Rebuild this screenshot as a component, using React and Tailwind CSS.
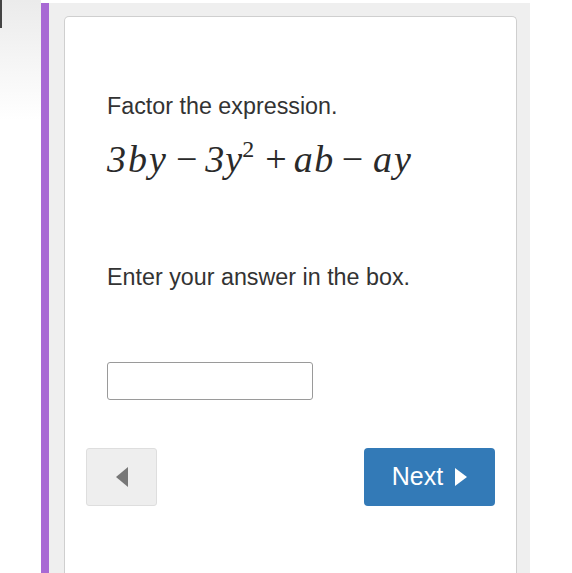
export default function App() {
  return (
    <div className="flex h-[573px] w-[572px] overflow-hidden bg-white font-['Liberation_Sans',Arial,sans-serif] text-[#333]">
      {/* left gutter */}
      <div className="flex w-[41px] shrink-0 flex-col">
        <div className="flex h-[120px] bg-gradient-to-b from-[#ebebeb] via-[#f5f5f5] to-white">
          <div className="h-[28px] w-[2px] bg-[#444]" />
        </div>
      </div>

      <div className="flex flex-1 pt-[3px]">
        <div className="w-[8px] shrink-0 bg-[#a869d4]" />

        <div className="flex w-[481px] shrink-0 flex-col bg-[#efefef] pl-[15px] pr-[13px] pt-[13px]">
          <div className="flex flex-1 flex-col rounded-t-[5px] border border-b-0 border-[#cfcfcf] bg-white">
            <div className="pl-[42px] pt-[74px]">
              <p className="text-[23.3px] leading-[30px]">Factor the expression.</p>

              <p className="mt-[18px] flex h-[40px] items-baseline font-['Liberation_Serif','Times_New_Roman',serif] text-[38px] leading-[40px] text-[#2a2a2a]">
                <i className="tracking-[2px]">3by</i>
                <span className="ml-[8px]">−</span>
                <i className="ml-[8px] tracking-[1px]">3y</i>
                <span className="relative top-[-15px] ml-[-1px] text-[24px] leading-none">2</span>
                <span className="ml-[11px]">+</span>
                <i className="ml-[7px] tracking-[1.5px]">ab</i>
                <span className="ml-[7px]">−</span>
                <i className="ml-[10px] tracking-[2px]">ay</i>
              </p>

              <p className="mt-[83px] text-[23.3px] leading-[30px]">Enter your answer in the box.</p>

              <input
                type="text"
                aria-label="answer"
                className="mt-[70px] block h-[38px] w-[206px] rounded-[3px] border border-[#9a9a9a] bg-white px-2 outline-none"
              />
            </div>

            <div className="mt-[48px] flex items-start justify-between pl-[21px] pr-[21px]">
              <button className="flex h-[58px] w-[71px] items-center justify-center rounded-[3px] border border-[#dedede] bg-[#eeeeee]">
                <svg width="12" height="20" viewBox="0 0 12 20">
                  <path d="M12 0 L0 10 L12 20 Z" fill="#777" />
                </svg>
              </button>

              <button className="flex h-[58px] w-[131px] items-center justify-center gap-[12px] rounded-[4px] bg-[#337ab7] text-[25px] text-white">
                <span>Next</span>
                <svg width="12" height="18" viewBox="0 0 12 18">
                  <path d="M0 0 L12 9 L0 18 Z" fill="#fff" />
                </svg>
              </button>
            </div>
          </div>
        </div>
      </div>
    </div>
  );
}
